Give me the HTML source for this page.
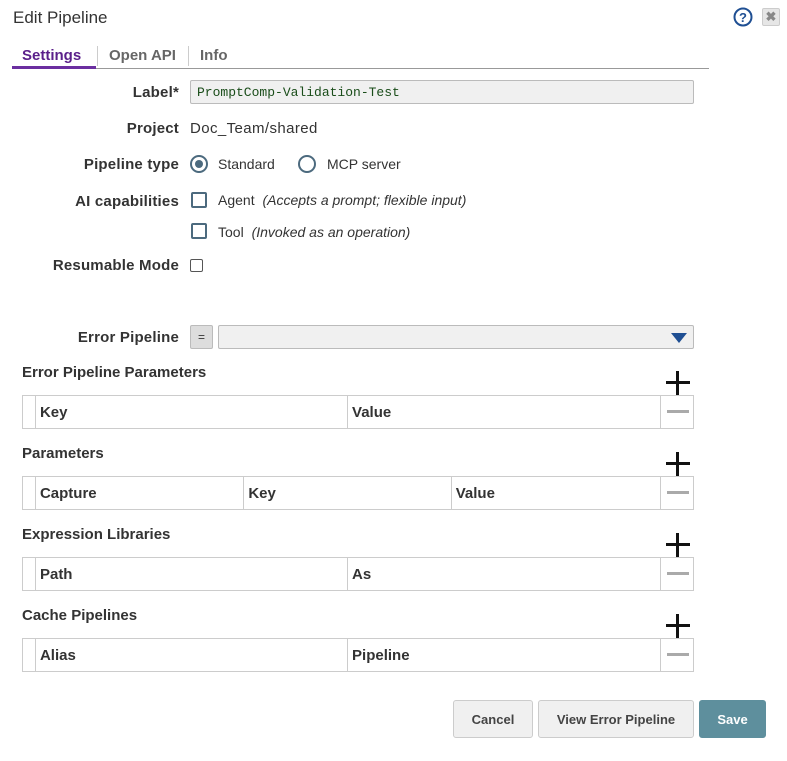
<!DOCTYPE html>
<html><head><style>
*{box-sizing:border-box;margin:0;padding:0}
body{width:787px;height:761px;background:#fff;font-family:"Liberation Sans",sans-serif;color:#333;position:relative;overflow:hidden}
.a{position:absolute}
.lbl{position:absolute;right:608px;font-weight:bold;font-size:15px;color:#333;white-space:nowrap;letter-spacing:0.2px}
.val{font-size:15px;color:#333}
.tbl{position:absolute;left:22px;width:672px;height:34px;border:1px solid #ccc;display:flex}
.tbl div{border-right:1px solid #ccc;font-weight:bold;font-size:15px;padding:8px 0 0 4px;color:#333}
.tbl div:last-child{border-right:none}
.sec{position:absolute;left:22px;font-weight:bold;font-size:15px;color:#333}
.plus{position:absolute;left:666px;width:24px;height:24px}
.plus:before{content:"";position:absolute;left:10px;top:0;width:3px;height:24px;background:#111}
.plus:after{content:"";position:absolute;left:0;top:10px;width:24px;height:3px;background:#111}
.minus{position:relative}
.minus:after{content:"";position:absolute;left:6px;top:14px;width:22px;height:3px;background:#aaa}
.cb{position:absolute;width:16px;height:16px;border:2px solid #4c6a7e;border-radius:2px}
.btn{position:absolute;top:700px;height:38px;border:1px solid #ccc;border-radius:3px;background:#f0f0f0;font-weight:bold;font-size:13px;color:#444;display:flex;align-items:center;justify-content:center}
i{font-size:14px}
</style></head><body>
<div class="a" style="left:13px;top:8px;font-size:17px;color:#333">Edit Pipeline</div>
<svg class="a" style="left:733px;top:7px" width="20" height="20"><circle cx="10" cy="10" r="8.5" fill="none" stroke="#1f4f93" stroke-width="2"/><text x="10" y="15" text-anchor="middle" font-size="13" font-weight="bold" fill="#1f4f93" font-family="Liberation Sans">?</text></svg>
<div class="a" style="left:762px;top:8px;width:18px;height:18px;background:#e6e6e6;border:1px solid #ccc;border-radius:2px;color:#888;font-size:13px;font-weight:bold;text-align:center;line-height:16px">✖</div>
<div class="a" style="left:12px;top:68px;width:697px;height:1px;background:#999"></div>
<div class="a" style="left:12px;top:66px;width:84px;height:3px;background:#6b2fa0"></div>
<div class="a" style="left:22px;top:47px;font-size:15px;font-weight:bold;color:#5a1f8a">Settings</div>
<div class="a" style="left:97px;top:46px;width:1px;height:20px;background:#ccc"></div>
<div class="a" style="left:109px;top:47px;font-size:15px;font-weight:bold;color:#666">Open API</div>
<div class="a" style="left:188px;top:46px;width:1px;height:20px;background:#ccc"></div>
<div class="a" style="left:200px;top:47px;font-size:15px;font-weight:bold;color:#666">Info</div>

<div class="lbl" style="top:84px">Label*</div>
<div class="a" style="left:190px;top:80px;width:504px;height:24px;background:#f0f0f0;border:1px solid #bbb;border-radius:2px;font-family:'Liberation Mono',monospace;font-size:13px;color:#1a4d1a;padding:4px 6px">PromptComp-Validation-Test</div>
<div class="lbl" style="top:120px">Project</div>
<div class="a val" style="left:190px;top:120px;letter-spacing:0.4px">Doc_Team/shared</div>
<div class="lbl" style="top:156px">Pipeline type</div>
<svg class="a" style="left:189px;top:154px" width="20" height="20"><circle cx="10" cy="10" r="8" fill="none" stroke="#4c6a7e" stroke-width="2"/><circle cx="10" cy="10" r="4" fill="#4c6a7e"/></svg>
<div class="a val" style="left:218px;top:156px;font-size:14px">Standard</div>
<svg class="a" style="left:297px;top:154px" width="20" height="20"><circle cx="10" cy="10" r="8" fill="none" stroke="#4c6a7e" stroke-width="2"/></svg>
<div class="a val" style="left:327px;top:156px;font-size:14px">MCP server</div>
<div class="lbl" style="top:193px">AI capabilities</div>
<div class="cb" style="left:191px;top:192px"></div>
<div class="a val" style="left:218px;top:192px;font-size:14px">Agent <i style="margin-left:4px">(Accepts a prompt; flexible input)</i></div>
<div class="cb" style="left:191px;top:223px"></div>
<div class="a val" style="left:218px;top:224px;font-size:14px">Tool <i style="margin-left:4px">(Invoked as an operation)</i></div>
<div class="lbl" style="top:257px">Resumable Mode</div>
<div class="a" style="left:190px;top:259px;width:13px;height:13px;border:1px solid #555;border-radius:2px"></div>

<div class="lbl" style="top:329px">Error Pipeline</div>
<div class="a" style="left:190px;top:325px;width:23px;height:24px;background:#ddd;border:1px solid #bbb;border-radius:2px;font-size:12px;text-align:center;line-height:22px">=</div>
<div class="a" style="left:218px;top:325px;width:476px;height:24px;background:#f0f0f0;border:1px solid #bbb;border-radius:2px"></div>
<svg class="a" style="left:670px;top:332px" width="18" height="12"><path d="M1 1H17L9 11Z" fill="#1f4f93"/></svg>

<div class="sec" style="top:364px">Error Pipeline Parameters</div>
<div class="plus" style="top:371px"></div>
<div class="tbl" style="top:395px"><div style="width:13px"></div><div style="width:313px">Key</div><div style="width:314px">Value</div><div class="minus" style="width:32px"></div></div>

<div class="sec" style="top:445px">Parameters</div>
<div class="plus" style="top:452px"></div>
<div class="tbl" style="top:476px"><div style="width:13px"></div><div style="width:209px">Capture</div><div style="width:208px">Key</div><div style="width:210px">Value</div><div class="minus" style="width:32px"></div></div>

<div class="sec" style="top:526px">Expression Libraries</div>
<div class="plus" style="top:533px"></div>
<div class="tbl" style="top:557px"><div style="width:13px"></div><div style="width:313px">Path</div><div style="width:314px">As</div><div class="minus" style="width:32px"></div></div>

<div class="sec" style="top:607px">Cache Pipelines</div>
<div class="plus" style="top:614px"></div>
<div class="tbl" style="top:638px"><div style="width:13px"></div><div style="width:313px">Alias</div><div style="width:314px">Pipeline</div><div class="minus" style="width:32px"></div></div>

<div class="btn" style="left:453px;width:80px">Cancel</div>
<div class="btn" style="left:538px;width:156px">View Error Pipeline</div>
<div class="btn" style="left:699px;width:67px;background:#5e8f9d;border-color:#5e8f9d;color:#fff">Save</div>
</body></html>
